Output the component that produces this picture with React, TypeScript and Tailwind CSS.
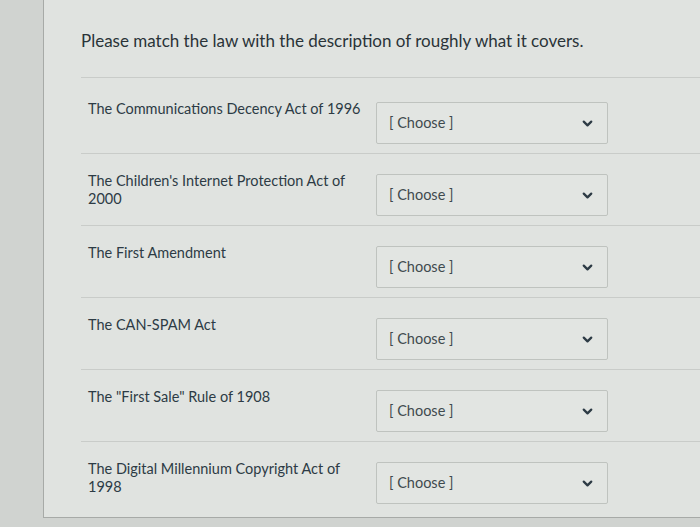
import { ChevronDown } from "lucide-react";

const laws: string[][] = [
  ["The Communications Decency Act of 1996"],
  ["The Children's Internet Protection Act of", "2000"],
  ["The First Amendment"],
  ["The CAN-SPAM Act"],
  ['The "First Sale" Rule of 1908'],
  ["The Digital Millennium Copyright Act of", "1998"],
];

function ChooseSelect() {
  return (
    <div className="w-[232px] h-[42px] shrink-0 border border-[#bfc3bf] rounded-[2px] bg-[#e2e5e2] flex items-center justify-between pl-[12px] pr-[12px]">
      <span className="text-[14.5px] text-[#404a4e]">[ Choose ]</span>
      <ChevronDown size={15} strokeWidth={3.6} className="text-[#2d3b45]" />
    </div>
  );
}

function MatchRow({ lines, first }: { lines: string[]; first?: boolean }) {
  return (
    <div
      className={
        first
          ? "h-[76px] border-t border-[#c9ccc9] flex items-start pt-[22px] pl-[7px]"
          : "h-[72px] border-t border-[#c9ccc9] flex items-start pt-[18px] pl-[7px]"
      }
    >
      <div className="w-[288px] text-[14.5px] leading-[18px] text-[#2d3b45]">
        {lines.map((l) => (
          <div key={l}>{l}</div>
        ))}
      </div>
      <div className="pt-[2px]">
        <ChooseSelect />
      </div>
    </div>
  );
}

export default function App() {
  return (
    <div
      className="min-h-screen bg-[#d0d3d0] pl-[43px] pb-[12px]"
      style={{ fontFamily: "Lato, 'Open Sans', sans-serif" }}
    >
      <div className="border-l border-b border-[#a7aaa7] bg-[#e0e3e0] pl-[37px] pb-[4px]">
        <div className="h-[77px] pt-[28px] text-[17px] text-[#2a3338]">
          Please match the law with the description of roughly what it covers.
        </div>
        {laws.map((l, i) => (
          <MatchRow key={l[0]} lines={l} first={i === 0} />
        ))}
      </div>
    </div>
  );
}
